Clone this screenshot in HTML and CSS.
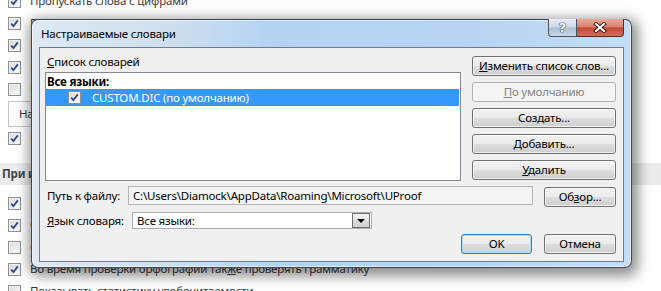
FILE: index.html
```html
<!DOCTYPE html>
<html lang="ru">
<head>
    <meta charset="UTF-8">
    <title>Настраиваемые словари</title>
    <link rel="stylesheet" href="styles.css">
</head>
<body>
    <!-- Word options page behind the dialog -->
    <div class="page">
        <div class="opt"><span class="cb on"></span>Пропускать слова с цифрами</div>
        <div class="opt"><span class="cb on"></span>Пропускать адреса Интернета и имена файлов</div>
        <div class="opt"><span class="cb on"></span>Помечать повторяющиеся слова</div>
        <div class="opt"><span class="cb on"></span>Использовать только основной словарь</div>
        <div class="opt"><span class="cb"></span>Предлагать только из основного словаря</div>
        <div class="wbtn">Настраиваемые словари...</div>
        <div class="opt"><span class="cb on"></span>Различать буквы е и ё</div>
        <div class="band">При исправлении правописания в Word</div>
        <div class="opt first"><span class="cb on"></span>Проверять орфографию в процессе набора текста</div>
        <div class="opt"><span class="cb on"></span>Отмечать ошибки грамматики в процессе набора текста</div>
        <div class="opt"><span class="cb"></span>Слова, которые часто путают</div>
        <div class="opt"><span class="cb on"></span>Во время проверки орфографии так<u>ж</u>е проверять грамматику</div>
        <div class="opt"><span class="cb"></span>Показывать статистику удобочитаемости</div>
    </div>

    <!-- Custom dictionaries dialog -->
    <div class="dialog">
        <div class="caption">
            <span class="title">Настраиваемые словари</span>
            <div class="capbtns">
                <span class="help">?</span>
                <span class="close">
                    <svg width="16" height="11" viewBox="0 0 16 11">
                        <path d="M4 2 L12 9 M12 2 L4 9" stroke="#3b1a16" stroke-width="4" stroke-linecap="square"/>
                        <path d="M4 2 L12 9 M12 2 L4 9" stroke="#fff" stroke-width="2" stroke-linecap="square"/>
                    </svg>
                </span>
            </div>
        </div>
        <div class="client">
            <div class="top">
                <div class="lists">
                    <div class="lbl-list"><u>С</u>писок словарей</div>
                    <div class="listbox">
                        <div class="lang-head">Все языки:</div>
                        <div class="item sel"><span class="cb on small"></span>CUSTOM.DIC (по умолчанию)</div>
                    </div>
                </div>
                <div class="side">
                    <button class="btn"><u>И</u>зменить список слов...</button>
                    <button class="btn off"><u>П</u>о умолчанию</button>
                    <button class="btn">Соз<u>д</u>ать...</button>
                    <button class="btn"><u>Д</u>обавить...</button>
                    <button class="btn"><u>У</u>далить</button>
                </div>
            </div>
            <div class="path-row">
                <span class="lbl path-lbl">Путь к файлу:</span>
                <div class="field">C:\Users\Diamock\AppData\Roaming\Microsoft\UProof</div>
                <button class="btn browse">Об<u>з</u>ор...</button>
            </div>
            <div class="lang-row">
                <span class="lbl lang-lbl"><u>Я</u>зык словаря:</span>
                <div class="combo">
                    <span>Все языки:</span>
                    <span class="drop"><i></i></span>
                </div>
            </div>
            <div class="actions">
                <button class="btn default">OK</button>
                <button class="btn">Отмена</button>
            </div>
        </div>
    </div>

    <script>
        // checkmarks for every checked box
        document.querySelectorAll('.cb.on').forEach(function (box) {
            box.innerHTML = '<svg width="11" height="11" viewBox="0 0 11 11"><path d="M2.2 5.6 L4.4 8 L8.8 2.4" fill="none" stroke="#2d4a8a" stroke-width="1.8"/></svg>';
        });
    </script>
</body>
</html>
```

FILE: styles.css
```css
/* Base */
body {
    margin: 0;
    width: 661px;
    height: 291px;
    overflow: hidden;
    position: relative;
    background: #fff;
    font: 11.5px/16px "Noto Sans", "Open Sans", sans-serif;
    letter-spacing: -0.2px;
    color: #3b3b3b;
}
u {
    text-decoration: underline;
    text-underline-offset: 1px;
}

/* Word options page */
.page {
    margin-top: -10px;
}
.opt {
    height: 22px;
    display: flex;
    align-items: center;
    padding-left: 8px;
    white-space: nowrap;
}
.opt.first {
    margin-top: 7px;
}
.cb {
    flex: none;
    position: relative;
    width: 13px;
    height: 13px;
    box-sizing: border-box;
    margin-right: 9px;
    border: 1px solid #8e8f8f;
    background: linear-gradient(135deg, #d8d8d8, #fdfdfd);
    box-shadow: inset 0 0 0 1px #f2f2f2;
}
.cb svg {
    position: absolute;
    left: 0;
    top: 0;
}
.wbtn {
    width: 170px;
    height: 26px;
    box-sizing: border-box;
    margin: 1px 0 0 8px;
    padding-left: 10px;
    display: flex;
    align-items: center;
    border: 1px solid #c6c6c6;
    background: #fdfdfd;
    white-space: nowrap;
}
.band {
    margin-top: 14px;
    height: 22px;
    padding-left: 2px;
    display: flex;
    align-items: center;
    background: #ebebeb;
    font-weight: bold;
    color: #444;
}

/* Dialog frame */
.dialog {
    position: absolute;
    left: 31px;
    top: 19px;
    width: 601px;
    height: 249px;
    box-sizing: border-box;
    padding: 0 7px 6px;
    border: 1px solid rgba(35, 45, 58, 0.85);
    border-radius: 7px;
    background: linear-gradient(90deg, #dde8f3 0, #cfe0f0 22%, #b4d3f2 40%, #b7d5f2 75%, #c4ddf4 100%);
    box-shadow: 2px 4px 13px 4px rgba(0, 0, 0, 0.45), inset 0 0 0 1px rgba(255, 255, 255, 0.55);
    color: #000;
}
.caption {
    height: 27px;
    display: flex;
    align-items: flex-start;
}
.title {
    padding: 6px 0 0 2px;
    white-space: nowrap;
}
.capbtns {
    margin-left: auto;
    margin-top: -1px;
    display: flex;
}
.help, .close {
    height: 18px;
    box-sizing: border-box;
    display: flex;
    align-items: center;
    justify-content: center;
}
.help {
    width: 29px;
    border: 1px solid #4a5664;
    border-top: 0;
    border-radius: 0 0 0 4px;
    background: linear-gradient(#e6edf5 0, #cbd8e6 48%, #aebfd3 52%, #c9d8e8 100%);
    color: #fff;
    font: bold 13px/1 "DejaVu Sans", sans-serif;
    text-shadow: 0 0 1px #2a3440, 0 0 1px #2a3440, 0 0 1px #2a3440;
}
.close {
    width: 47px;
    border: 1px solid #5a2620;
    border-top: 0;
    border-left: 0;
    border-radius: 0 0 4px 0;
    background: linear-gradient(#eba898 0, #d98271 45%, #c34a36 52%, #d26d5d 100%);
}

/* Client area */
.client {
    height: 215px;
    box-sizing: border-box;
    padding: 6px 7px 0 5px;
    border: 1px solid #6c7c8e;
    background: #f0f0f0;
}
.top {
    display: flex;
}
.lists {
    width: 416px;
}
.lbl-list {
    padding-left: 2px;
    white-space: nowrap;
}
.listbox {
    margin-top: 2px;
    height: 109px;
    box-sizing: border-box;
    padding: 1px 1px 0 0;
    border: 1px solid #828790;
    background: #fff;
}
.lang-head {
    height: 15px;
    line-height: 15px;
    padding-left: 1px;
    font-weight: bold;
}
.item {
    height: 17px;
    display: flex;
    align-items: center;
    padding-left: 22px;
    white-space: nowrap;
}
.item.sel {
    background: #3399ff;
    color: #fff;
}
.item .cb {
    margin-right: 11px;
}
.side {
    width: 144px;
    margin-left: 11px;
    padding-top: 2px;
    display: flex;
    flex-direction: column;
    gap: 6px;
}

/* Buttons */
.btn {
    height: 20px;
    box-sizing: border-box;
    padding: 0;
    border: 1px solid #707070;
    border-radius: 3px;
    background: linear-gradient(#f2f2f2 0, #ebebeb 50%, #dddddd 50%, #cfcfcf 100%);
    box-shadow: inset 0 0 0 1px rgba(255, 255, 255, 0.7);
    font: 11.5px/18px "Noto Sans", "Open Sans", sans-serif;
    letter-spacing: -0.2px;
    color: #000;
    text-align: center;
    white-space: nowrap;
}
.btn.off {
    border-color: #adb2b5;
    background: #f4f4f4;
    box-shadow: none;
    color: #838383;
}
.btn.default {
    border-color: #3c7fb1;
    box-shadow: inset 0 0 0 1px #a8dcf6;
}

/* Path and language rows */
.path-row, .lang-row {
    display: flex;
    align-items: flex-start;
}
.path-row {
    margin-top: 5px;
}
.lbl {
    flex: none;
    box-sizing: border-box;
    padding-left: 2px;
    white-space: nowrap;
}
.path-lbl {
    width: 83px;
    line-height: 19px;
}
.field {
    width: 405px;
    height: 19px;
    box-sizing: border-box;
    padding-left: 4px;
    border: 1px solid #b4b4b4;
    background: #f4f4f4;
    line-height: 17px;
    white-space: nowrap;
    overflow: hidden;
}
.browse {
    width: 72px;
    margin: 1px 0 0 11px;
}
.lang-row {
    margin-top: 5px;
}
.lang-lbl {
    width: 87px;
    line-height: 17px;
}
.combo {
    width: 240px;
    height: 17px;
    box-sizing: border-box;
    padding: 0 1px 0 4px;
    display: flex;
    align-items: center;
    justify-content: space-between;
    border: 1px solid #abadb3;
    background: #fff;
    line-height: 15px;
}
.drop {
    width: 18px;
    height: 15px;
    box-sizing: border-box;
    display: flex;
    align-items: center;
    justify-content: center;
    border: 1px solid #707070;
    background: linear-gradient(#f2f2f2 0, #ebebeb 50%, #dddddd 50%, #cfcfcf 100%);
}
.drop i {
    width: 0;
    height: 0;
    border-left: 4px solid transparent;
    border-right: 4px solid transparent;
    border-top: 4px solid #000;
}
.actions {
    margin-top: 5px;
    display: flex;
    justify-content: flex-end;
    gap: 12px;
}
.actions .btn:first-child {
    width: 71px;
}
.actions .btn:last-child {
    width: 72px;
}
```
